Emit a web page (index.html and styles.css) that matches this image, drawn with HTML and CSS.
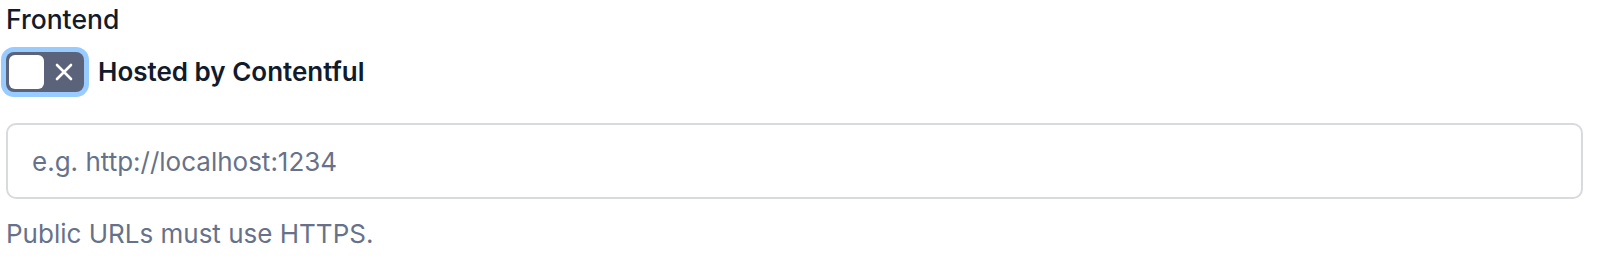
FILE: index.html
```html
<!DOCTYPE html>
<html lang="en">
  <head>
    <meta charset="UTF-8" />
    <meta name="viewport" content="width=device-width, initial-scale=1.0" />
    <title>Frontend</title>
    <link rel="stylesheet" href="styles.css">
  </head>
  <body>
    <div class="field">
      <div class="field-label">Frontend</div>
      <label class="switch-row">
        <span class="switch">
          <span class="switch-thumb"></span>
          <svg class="switch-icon" viewBox="0 0 20 20" width="20" height="20">
            <path d="M3 3 L17 17 M17 3 L3 17" stroke="#fff" stroke-width="2.6" stroke-linecap="round" fill="none" />
          </svg>
        </span>
        <span class="switch-label">Hosted by Contentful</span>
      </label>
      <input class="text-input" type="text" placeholder="e.g. http://localhost:1234" />
      <div class="help-text">Public URLs must use HTTPS.</div>
    </div>
  </body>
</html>
```

FILE: styles.css
```css
* {
  margin: 0;
  padding: 0;
  box-sizing: border-box;
}

body {
  font-family: Inter, "Noto Sans", sans-serif;
  background-color: #fff;
  color: #111b2b;
}

.field {
  padding: 2px 17px 0 6px;
}

.field-label {
  font-size: 26.5px;
  font-weight: 500;
  line-height: 34px;
}

.switch-row {
  display: flex;
  align-items: center;
  gap: 14px;
  margin-top: 16px;
}

.switch {
  display: flex;
  align-items: center;
  width: 78px;
  height: 40px;
  padding: 0 3px;
  border-radius: 8px;
  background-color: #5a6379;
  box-shadow: 0 0 0 5px #98cbff;
}

.switch-thumb {
  width: 35px;
  height: 34px;
  border-radius: 6px;
  background-color: #fff;
}

.switch-icon {
  margin-left: 10px;
}

.switch-label {
  font-size: 26px;
  font-weight: 600;
  line-height: 34px;
}

.text-input {
  display: block;
  width: 100%;
  height: 76px;
  margin-top: 31px;
  padding: 0 24px;
  border: 2px solid #d8dadd;
  border-radius: 10px;
  font-family: inherit;
  font-size: 26px;
  color: #111b2b;
  background-color: #fff;
  outline: none;
}

.text-input::placeholder {
  color: #67728a;
}

.help-text {
  margin-top: 18px;
  font-size: 26px;
  line-height: 34px;
  color: #67728a;
}
```
